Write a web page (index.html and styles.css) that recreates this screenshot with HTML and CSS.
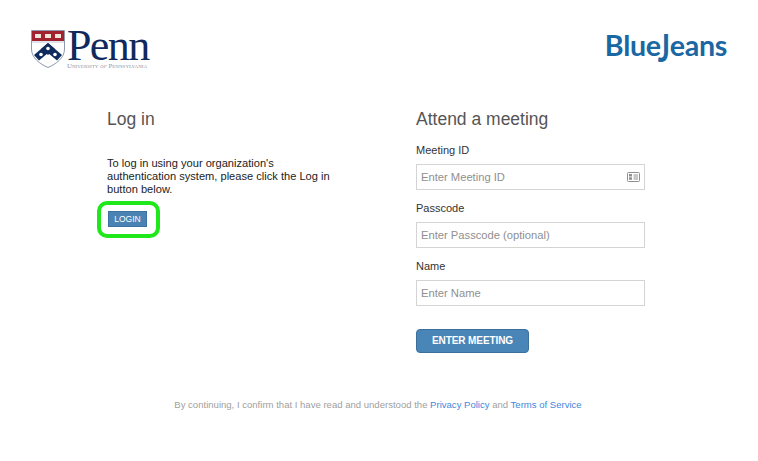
FILE: index.html
```html
<!DOCTYPE html>
<html lang="en">
  <head>
    <meta charset="UTF-8" />
    <meta name="viewport" content="width=device-width, initial-scale=1.0" />
    <title>BlueJeans - Penn</title>
    <link rel="stylesheet" href="styles.css">
  </head>
  <body>
    <!-- Logos -->
    <header class="top-bar">
      <div class="penn-logo">
        <svg class="penn-shield" viewBox="0 0 34 38" width="34" height="38">
          <path d="M0.5 0.5H33.5V19C33.5 28 25 34 17 37.5C9 34 0.5 28 0.5 19Z" fill="#fff" stroke="#8d99ad" stroke-width="1"/>
          <path d="M1 1H33V11H1Z" fill="#a3222f"/>
          <path d="M4 4h6v4H4zM14 4h6v4h-6zM24 4h6v4h-6z" fill="#efe6da"/>
          <path d="M1 11H33V13H1Z" fill="#dfe3ea"/>
          <path d="M17 13L31 25L26 30.5L17 23L8 30.5L3 25Z" fill="#0f2a5c"/>
          <path d="M17 13L24 19L17 25L10 19Z" fill="#0f2a5c"/>
          <circle cx="17" cy="18.5" r="1.8" fill="#fff"/>
          <circle cx="10" cy="24.5" r="1.8" fill="#fff"/>
          <circle cx="24" cy="24.5" r="1.8" fill="#fff"/>
        </svg>
        <div class="penn-words">
          <span class="penn-name">Penn</span>
          <span class="penn-sub">University <em>of</em> Pennsylvania</span>
        </div>
      </div>
      <div class="bj-logo">Blue<span class="bj-j">J</span>eans</div>
    </header>

    <main class="columns">
      <!-- Log in -->
      <section class="login-col">
        <h2>Log in</h2>
        <p class="login-text">To log in using your organization's authentication system, please click the Log in button below.</p>
        <div class="login-action">
          <button class="login-btn">LOGIN</button>
          <span class="highlight"></span>
        </div>
      </section>

      <!-- Attend a meeting -->
      <section class="meeting-col">
        <h2>Attend a meeting</h2>
        <label class="field-label">Meeting ID</label>
        <div class="input-wrap">
          <input type="text" placeholder="Enter Meeting ID" />
          <svg class="card-icon" viewBox="0 0 13 10" width="13" height="10">
            <rect x="0.5" y="0.5" width="12" height="9" rx="1" fill="#fff" stroke="#8f8f8f"/>
            <rect x="2" y="2" width="3" height="2.5" fill="#8f8f8f"/>
            <rect x="2" y="5.3" width="3" height="2.5" fill="#8f8f8f"/>
            <path d="M6.5 3H11M6.5 5H11M6.5 7H11" stroke="#8f8f8f"/>
          </svg>
        </div>
        <label class="field-label">Passcode</label>
        <input type="text" placeholder="Enter Passcode (optional)" />
        <label class="field-label">Name</label>
        <input type="text" placeholder="Enter Name" />
        <button class="enter-btn">ENTER MEETING</button>
      </section>
    </main>

    <footer class="legal">
      By continuing, I confirm that I have read and understood the
      <a href="#">Privacy Policy</a> and <a href="#">Terms of Service</a>
    </footer>
  </body>
</html>
```

FILE: styles.css
```css
* {
  margin: 0;
  padding: 0;
  box-sizing: border-box;
}
body {
  font-family: "Liberation Sans", Arial, sans-serif;
  background: #fff;
  color: #222;
  width: 758px;
  height: 461px;
  overflow: hidden;
}

/* header */
.top-bar {
  display: flex;
  justify-content: space-between;
  align-items: flex-start;
  padding: 29px 31px 0 31px;
  height: 100px;
}
.penn-logo {
  display: flex;
  gap: 2px;
}
.penn-shield {
  margin-top: 1px;
}
.penn-words {
  display: flex;
  flex-direction: column;
}
.penn-name {
  font-family: "Liberation Serif", serif;
  font-size: 44px;
  line-height: 33px;
  letter-spacing: -1.6px;
  color: #10295c;
}
.penn-sub {
  font-family: "Liberation Serif", serif;
  font-size: 6.9px;
  line-height: 6px;
  margin-top: 1px;
  font-variant: small-caps;
  color: #8a92a6;
  white-space: nowrap;
}
.bj-logo {
  font-family: "Lato", sans-serif;
  font-weight: 700;
  font-size: 28.6px;
  line-height: 32px;
  letter-spacing: -0.3px;
  color: #1a67a3;
}
.bj-j {
  display: inline-block;
  margin-left: -3px;
  transform: scaleY(1.35);
  transform-origin: 50% 28%;
}

/* colonnes */
.columns {
  display: flex;
  padding-left: 107px;
}
h2 {
  font-size: 17.5px;
  font-weight: 400;
  line-height: 22px;
  color: #555;
}
.login-col {
  width: 309px;
  padding-top: 8px;
}
.login-text {
  font-size: 11.1px;
  line-height: 13px;
  width: 235px;
  margin-top: 27px;
  color: #222;
}
.login-action {
  position: relative;
  margin: 15px 0 0 1px;
  width: 39px;
}
.login-btn {
  display: block;
  width: 39px;
  height: 16px;
  padding-bottom: 1px;
  background: #4a82b3;
  border: 1px solid #3d719f;
  color: #fff;
  font-family: "Liberation Sans", Arial, sans-serif;
  font-size: 8.5px;
}
.highlight {
  position: absolute;
  left: -11px;
  top: -10px;
  width: 63px;
  height: 37px;
  border: 4px solid #1ee81a;
  border-radius: 10px;
}

/* formulaire */
.meeting-col {
  width: 229px;
  padding-top: 8px;
}
.field-label {
  display: block;
  font-size: 11px;
  line-height: 14px;
  color: #333;
  margin: 11px 0 7px;
}
.meeting-col h2 + .field-label {
  margin-top: 13px;
}
input {
  display: block;
  width: 229px;
  height: 26px;
  border: 1px solid #d4d4d4;
  padding: 0 4px;
  font-family: "Liberation Sans", Arial, sans-serif;
  font-size: 11.2px;
  color: #333;
  outline: none;
}
input::placeholder {
  color: #8f8f8f;
  opacity: 1;
}
.input-wrap {
  position: relative;
}
.card-icon {
  position: absolute;
  right: 5px;
  top: 8px;
}
.enter-btn {
  display: block;
  width: 113px;
  height: 24px;
  margin-top: 23px;
  padding-bottom: 2px;
  background: #4a85b8;
  border: 1px solid #3a6f9e;
  border-radius: 4px;
  color: #fff;
  font-family: "Liberation Sans", Arial, sans-serif;
  font-size: 10px;
  font-weight: 700;
  letter-spacing: -0.1px;
}

/* bas de page */
.legal {
  margin-top: 46px;
  padding-right: 2px;
  text-align: center;
  font-size: 9.55px;
  line-height: 12px;
  color: #a0a0a0;
}
.legal a {
  color: #4189dd;
  text-decoration: none;
}
```
